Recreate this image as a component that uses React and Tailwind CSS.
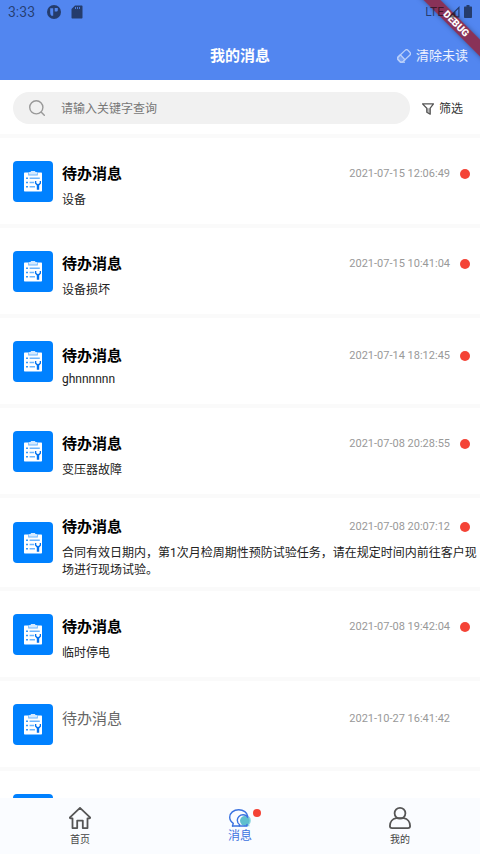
// App.jsx
import React, { useState } from 'react';

const messages = [
  { id: 1, title: "待办消息", content: "设备", time: "2021-07-15 12:06:49", unread: true },
  { id: 2, title: "待办消息", content: "设备损坏", time: "2021-07-15 10:41:04", unread: true },
  { id: 3, title: "待办消息", content: "ghnnnnnn", time: "2021-07-14 18:12:45", unread: true },
  { id: 4, title: "待办消息", content: "变压器故障", time: "2021-07-08 20:28:55", unread: true },
  { id: 5, title: "待办消息", content: "合同有效日期内，第1次月检周期性预防试验任务，请在规定时间内前往客户现场进行现场试验。", time: "2021-07-08 20:07:12", unread: true },
  { id: 6, title: "待办消息", content: "临时停电", time: "2021-07-08 19:42:04", unread: true },
  { id: 7, title: "待办消息", content: "", time: "2021-10-27 16:41:42", unread: false },
  { id: 8, title: "", content: "", time: "", unread: false },
];

// sits above the debug banner, like the system bar does
const StatusBar = () => (
  <div className="relative z-10 flex h-6 items-center px-2 text-black/55">
    <span className="text-sm leading-6">3:33</span>
    <svg className="ml-3 h-3.5 w-3.5" viewBox="0 0 14 14">
      <circle cx="7" cy="7" r="7" fill="currentColor" />
      <path d="M3.2 3.2h3v7.6h-1.8c-.8-.8-1.2-1.8-1.2-3zM7.7 3h3.1v2.2c0 .8-.6 1.3-1.3 1.3H7.700z" fill="#5286f0" />
    </svg>
    <svg className="ml-2.5 h-3.5 w-3" viewBox="0 0 12 14">
      <path d="M4 .5h6.500c.6 0 1 .4 1 1v11c0 .6-.4 1-1 1h-9c-.6 0-1-.4-1-1V4z" fill="currentColor" />
      <path d="M4.500 2v2M6.500 2v2M8.500 2v2" stroke="#5286f0" strokeWidth=".9" />
    </svg>
    <span className="ml-auto text-xs leading-6">LTE</span>
    <svg className="ml-1 h-3 w-3" viewBox="0 0 12 12">
      <path d="M11.500 0v11.500H0zM10.300 2.900 7.500 5.700v4.600h2.800z" fill="currentColor" fillRule="evenodd" />
    </svg>
    <svg className="ml-1 h-3.5 w-2" viewBox="0 0 8 14">
      <path d="M2.500 0h3v1.500H7c.6 0 1 .4 1 1V12c0 .6-.4 1-1 1H1c-.6 0-1-.4-1-1V2.500c0-.6.4-1 1-1h1.500z" fill="currentColor" />
    </svg>
  </div>
);

const DebugBanner = () => (
  <div className="pointer-events-none absolute right-0 top-0 h-16 w-16 overflow-hidden">
    <div className="absolute -right-9 top-[18px] h-3 w-30 rotate-45 bg-[#8f2947]/90 text-center text-[10px] font-black leading-3 text-white shadow-[0_0_5px_rgba(0,0,0,0.35)]">
      DEBUG
    </div>
  </div>
);

const TaskIcon = () => (
  <div className="flex h-[41px] w-10 shrink-0 items-center justify-center rounded-[4px] bg-[#0081ff]">
    <svg className="h-[22px] w-5" viewBox="0 0 20 22">
      <path d="M2 2.500h16c.6 0 1 .4 1 1V20.500c0 .6-.4 1-1 1H2c-.6 0-1-.4-1-1V3.500c0-.6.4-1 1-1z" fill="#fff" />
      <path d="M5.200 2.500h1v1.800h7.600V2.500h1v3H5.200z" fill="#6db6ff" />
      <path d="M6.200 4.300V1.900h1.600V.9h4.400v1h1.600v2.400z" fill="#d5eaff" />
      <path d="M3.200 8.300h1.600M3.200 12.500h1.600M3.200 16.700h1.600" stroke="#0081ff" strokeWidth="1.600" />
      <path d="M6.600 8.300h10.200M6.600 12.500h4.600M6.600 16.700h5.400" stroke="#6db6ff" strokeWidth="1.400" />
      <path d="M12 11v2.600l1.800 1.900v4.300h2.400v-4.300l1.800-1.900V11h-1.300v2l-1.700 1.200L13.300 13v-2z" fill="#0072f0" />
    </svg>
  </div>
);

const MessageCard = ({ message }) => (
  <li className="flex min-h-[90px] items-center border-b-4 border-[#fafafa] pl-[13px]">
    <TaskIcon />
    <div className="ml-[9px] min-w-0 flex-1 pb-2.5 pt-[18px]">
      <div className="flex items-center pr-2.5">
        <h2 className={message.unread ? "text-[15px] font-bold leading-[22px] text-black" : "text-[15px] leading-[22px] text-[#666]"}>
          {message.title}
        </h2>
        <time className="ml-auto text-[11px] leading-4 text-[#999]">{message.time}</time>
        <span className={message.unread ? "ml-2.5 h-2.5 w-2.5 rounded-full bg-[#f44336]" : "ml-2.5 h-2.5 w-2.5"}></span>
      </div>
      <p className="mt-[5px] min-h-3.5 text-xs leading-[normal] text-[#222]">{message.content}</p>
    </div>
  </li>
);

const HomeIcon = () => (
  <svg className="h-[22px] w-[22px]" viewBox="0 0 22 22" fill="none" stroke="#555" strokeWidth="1.800" strokeLinejoin="round">
    <path d="M11 .9 21 10.300c.3.500 0 1-.6 1h-1.900v9.800h-4.700v-7.500H8.200v7.500H3.500v-9.800H1.600c-.6 0-.9-.5-.6-1z" />
  </svg>
);

const ChatIcon = () => (
  <svg className="h-[18px] w-[22px]" viewBox="0 0 22 18" fill="none" strokeLinejoin="round" strokeLinecap="round">
    <path d="M20.500 7.500c1.900 2.800 1.800 6-.4 8.200l.6 1.500h-6z" fill="#8fd5df" />
    <circle cx="15.800" cy="11.800" r="4.800" fill="#5fbfce" />
    <g stroke="#3a72e0" strokeWidth="1.400">
      <path d="M3.500 17 4.300 14.300C2 12.800.7 10.600.7 8.200.7 4 4.700.7 9.700.7c4.700 0 8.600 2.700 9.200 7" />
      <path d="M18.900 8.500c-1-1.700-2.800-2.700-4.900-2.700-3.200 0-5.700 2.500-5.700 5.500 0 2 .9 3.600 2.500 4.600l-.5 1.100" />
      <path d="M3.500 17h14.500v-1.500" />
    </g>
  </svg>
);

const UserIcon = () => (
  <svg className="h-[22px] w-[22px]" viewBox="0 0 22 22" fill="none" stroke="#555" strokeWidth="1.800" strokeLinejoin="round">
    <circle cx="11" cy="6.300" r="5.400" />
    <path d="M7.200 11.200C3.500 11.900.9 15 .9 19c0 1.400.8 2.100 2.200 2.100h15.800c1.400 0 2.200-.7 2.200-2.100 0-4-2.600-7.100-6.300-7.800M7.200 11.200h7.600" />
  </svg>
);

const App = () => {
  const [search, setSearch] = useState("");

  return (
    <div className="relative flex h-screen flex-col overflow-hidden bg-white font-[Roboto,'Noto_Sans_CJK_SC',sans-serif]" lang="zh-CN">
      <header className="shrink-0 bg-[#5286f0]">
        <StatusBar />
        <div className="grid h-14 grid-cols-3 items-center px-3 pt-2">
          <h1 className="col-start-2 text-center text-[15px] font-bold leading-[22px] text-white">我的消息</h1>
          <button className="flex items-center gap-[5px] justify-self-end text-[13px] leading-5 text-white/90">
            <svg className="h-3.5 w-3.5" viewBox="0 0 14 14" fill="none" stroke="#b9cffa" strokeWidth="1.300" strokeLinejoin="round">
              <g transform="rotate(-43 7 7)">
                <rect x=".2" y="3.600" width="13.600" height="6.800" rx="2.200" />
                <path d="M2.400 3.600h2.800v6.800H2.400c-1.200 0-2.200-1-2.200-2.200V5.800c0-1.200 1-2.200 2.200-2.200z" fill="#b9cffa" fillOpacity=".4" />
              </g>
              <path d="M4.500 13.200H8" />
            </svg>
            清除未读
          </button>
        </div>
      </header>

      {/* Search and filter */}
      <div className="flex shrink-0 items-center border-b-4 border-[#fafafa] pb-2.5 pl-[13px] pr-[17px] pt-3">
        <label className="flex h-8 min-w-0 flex-1 items-center rounded-full bg-[#f1f1f1] px-4">
          <svg className="h-4 w-4 shrink-0" viewBox="0 0 16 16" fill="none" stroke="#999" strokeWidth="1.400" strokeLinecap="round">
            <circle cx="7.300" cy="7.300" r="6.600" />
            <path d="m12.300 12.300 3 3" />
          </svg>
          <input
            type="text"
            aria-label="搜索"
            placeholder="请输入关键字查询"
            className="ml-4 min-w-0 flex-1 bg-transparent pt-px text-xs leading-5 text-[#333] outline-none placeholder:text-[#777]"
            value={search}
            onChange={(e) => { setSearch(e.target.value) }}
          />
        </label>
        <button className="ml-3 flex items-center gap-[5px] pt-0.5 text-xs leading-5 text-[#333]">
          <svg className="h-3 w-3" viewBox="0 0 12 12" fill="none" stroke="#555" strokeWidth="1.300" strokeLinejoin="round">
            <path d="M5 5.200h3v6L5 9.300z" fill="#bbb" stroke="none" />
            <path d="M.5.900h11L8.200 5.200v6L4.800 9.300V5.200z" />
          </svg>
          筛选
        </button>
      </div>

      {/* Message list */}
      <ul className="min-h-0 flex-1 overflow-hidden">
        {messages.filter((message) => (message.title + message.content).includes(search)).map((message) => (
          <MessageCard key={message.id} message={message} />
        ))}
      </ul>

      {/* Bottom tabs */}
      <nav className="grid h-14 shrink-0 grid-cols-3 bg-[#fafcff]">
        <a href="#home" className="flex flex-col items-center pt-[9px] text-[10px] leading-4 text-[#444]">
          <HomeIcon />
          <span className="mt-[3px]">首页</span>
        </a>
        <a href="#messages" className="flex flex-col items-center pt-[11px] text-xs leading-4 text-[#3a72e0]">
          <span className="relative">
            <ChatIcon />
            <span className="absolute -right-2.5 top-0 h-2 w-2 rounded-full bg-[#f44336]"></span>
          </span>
          <span className="mt-px">消息</span>
        </a>
        <a href="#mine" className="flex flex-col items-center pt-[9px] text-[10px] leading-4 text-[#444]">
          <UserIcon />
          <span className="mt-[3px]">我的</span>
        </a>
      </nav>

      <DebugBanner />
    </div>
  );
};

export default App;
